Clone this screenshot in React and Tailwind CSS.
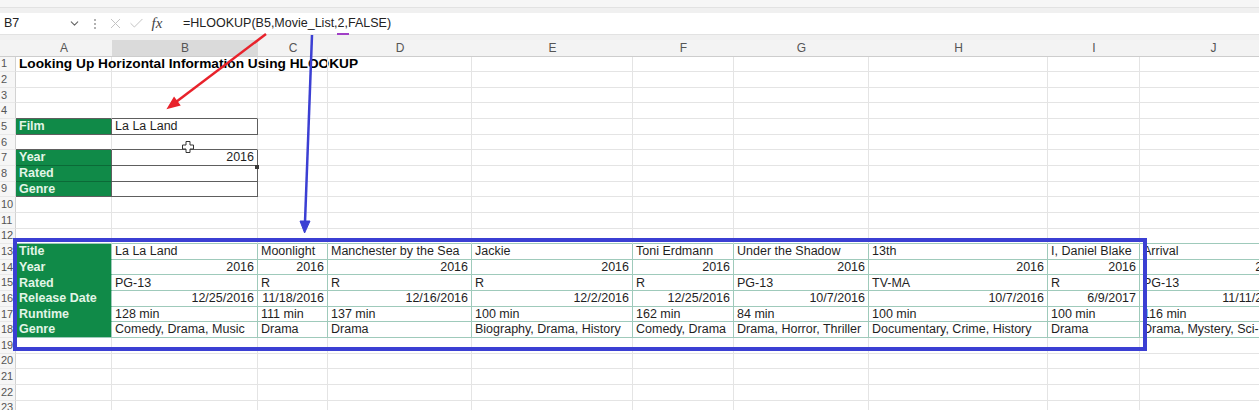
import React from "react";
import { ChevronDown, X, Check } from "lucide-react";

const LETTERS = ["A", "B", "C", "D", "E", "F", "G", "H", "I", "J"];

const LABELS = ["Title", "Year", "Rated", "Release Date", "Runtime", "Genre"];

// movie table, rows 13-18, columns B-J
const MOVIES = [
  ["La La Land", "2016", "PG-13", "12/25/2016", "128 min", "Comedy, Drama, Music"],
  ["Moonlight", "2016", "R", "11/18/2016", "111 min", "Drama"],
  ["Manchester by the Sea", "2016", "R", "12/16/2016", "137 min", "Drama"],
  ["Jackie", "2016", "R", "12/2/2016", "100 min", "Biography, Drama, History"],
  ["Toni Erdmann", "2016", "R", "12/25/2016", "162 min", "Comedy, Drama"],
  ["Under the Shadow", "2016", "PG-13", "10/7/2016", "84 min", "Drama, Horror, Thriller"],
  ["13th", "2016", "TV-MA", "10/7/2016", "100 min", "Documentary, Crime, History"],
  ["I, Daniel Blake", "2016", "R", "6/9/2017", "100 min", "Drama"],
  ["Arrival", "2016", "PG-13", "11/11/2016", "116 min", "Drama, Mystery, Sci-Fi"],
];

const RIGHT_ROWS = [1, 3]; // year + release date are right aligned

const isSmall = (r, c) =>
  (r === 5 && c >= 0 && c <= 1) || (r >= 7 && r <= 9 && c >= 0 && c <= 1);
const isBig = (r, c) => r >= 13 && r <= 18 && c >= 0 && c <= 9;
const isGreen = (r, c) => c === 0 && (isSmall(r, c) || isBig(r, c));

const R_CLS = {
  light: "border-r-[#e4e4e4]",
  dark: "border-r-[#5e5e5e]",
  teal: "border-r-[#9fcabb]",
};
const B_CLS = {
  light: "border-b-[#e4e4e4]",
  dark: "border-b-[#5e5e5e]",
  teal: "border-b-[#9fcabb]",
  green: "border-b-[#108a48]",
  dgreen: "border-b-[#0b6a37]",
};

const rightKind = (r, c) => {
  if (isSmall(r, c) || isSmall(r, c + 1)) return "dark";
  if (isBig(r, c) || isBig(r, c + 1)) return "teal";
  return "light";
};

const bottomKind = (r, c) => {
  if (isGreen(r, c) && isGreen(r + 1, c)) return isBig(r, c) ? "green" : "dgreen";
  if (isSmall(r, c) || isSmall(r + 1, c)) return "dark";
  if (isBig(r, c) || isBig(r + 1, c)) return "teal";
  return "light";
};

const cellData = (r, c) => {
  if (r === 1 && c === 0)
    return { t: "Looking Up Horizontal Information Using HLOOKUP", title: true };
  if (r === 5 && c === 0) return { t: "Film" };
  if (r === 5 && c === 1) return { t: "La La Land" };
  if (r === 7 && c === 0) return { t: "Year" };
  if (r === 7 && c === 1) return { t: "2016", right: true };
  if (r === 8 && c === 0) return { t: "Rated" };
  if (r === 9 && c === 0) return { t: "Genre" };
  if (r >= 13 && r <= 18) {
    const i = r - 13;
    if (c === 0) return { t: LABELS[i] };
    return { t: MOVIES[c - 1][i], right: RIGHT_ROWS.includes(i) };
  }
  return { t: "" };
};

const Cell = ({ r, c }) => {
  const d = cellData(r, c);
  const green = isGreen(r, c);
  return (
    <div
      className={[
        "flex items-center whitespace-nowrap border-r border-b px-[3px] leading-none",
        R_CLS[rightKind(r, c)],
        B_CLS[bottomKind(r, c)],
        d.right ? "justify-end" : "justify-start",
        green ? "bg-[#108a48] font-bold text-[#e2f5e7]" : "text-[#1f1f1f]",
        d.title ? "text-[13.7px] font-bold text-black" : "text-[12.5px]",
      ].join(" ")}
    >
      {d.t}
    </div>
  );
};

const Grid = () => {
  const rows = Array.from({ length: 23 }, (_, i) => i + 1);
  return (
    <div className="grid w-[1300px] grid-cols-[16px_96px_146px_70px_144px_161px_101px_135px_179px_92px_147px] auto-rows-[15.65px]">
      {rows.map((r) => (
        <React.Fragment key={r}>
          <div className="flex items-center border-r border-b border-r-[#d2d2d2] border-b-[#e8e8e8] bg-[#f6f6f6] pl-px text-[11px] leading-none text-[#555]">
            {r}
          </div>
          {LETTERS.map((_, c) => (
            <Cell key={c} r={r} c={c} />
          ))}
        </React.Fragment>
      ))}
    </div>
  );
};

const FormulaBar = () => (
  <div className="flex h-[21px] items-center bg-white text-[12.5px] text-[#222]">
    <div className="flex w-[86px] items-center justify-between pl-[4px] pr-[5px]">
      <span>B7</span>
      <ChevronDown size={13} strokeWidth={2} className="text-[#666]" />
    </div>
    <div className="flex w-[18px] flex-col items-center justify-center gap-[2px]">
      <span className="h-[2px] w-[2px] rounded-full bg-[#999]" />
      <span className="h-[2px] w-[2px] rounded-full bg-[#999]" />
      <span className="h-[2px] w-[2px] rounded-full bg-[#999]" />
    </div>
    <div className="flex w-[22px] justify-center">
      <X size={17} strokeWidth={1.4} className="text-[#c2c2c2]" />
    </div>
    <div className="flex w-[20px] justify-center">
      <Check size={17} strokeWidth={1.4} className="text-[#c2c2c2]" />
    </div>
    <div className="flex w-[22px] justify-center font-['Liberation_Serif',serif] text-[15px] italic text-[#444]">
      fx
    </div>
    <div className="ml-[15px]">=HLOOKUP(B5,Movie_List,2,FALSE)</div>
  </div>
);

const ColumnHeaders = () => (
  <div className="grid h-[16.5px] w-[1300px] grid-cols-[16px_96px_146px_70px_144px_161px_101px_135px_179px_92px_147px] border-b border-[#cdcdcd] bg-[#f3f3f3] text-[12px] leading-none text-[#555]">
    <div />
    {LETTERS.map((l) => (
      <div
        key={l}
        className={
          "flex items-center justify-center " + (l === "B" ? "bg-[#dadada]" : "")
        }
      >
        {l}
      </div>
    ))}
  </div>
);

const Annotations = () => (
  <>
    {/* blue box round the movie table */}
    <div className="pointer-events-none absolute left-[13px] top-[238px] h-[113px] w-[1134px] border-4 border-[#3b3fd3]" />
    {/* purple mark under the 2 */}
    <div className="absolute left-[337px] top-[33px] h-[2px] w-[12px] bg-[#a03fc6]" />
    {/* fill handle */}
    <div className="absolute left-[255px] top-[165px] h-[4px] w-[4px] bg-[#3a3a3a]" />
    <svg
      className="pointer-events-none absolute left-0 top-0"
      width="1259"
      height="410"
      viewBox="0 0 1259 410"
    >
      <line x1="266" y1="34" x2="176" y2="102" stroke="#e8222b" strokeWidth="2.5" />
      <polygon points="168,108 179.5,105 174.1,97.8" fill="#e8222b" stroke="#e8222b" strokeWidth="1.5" />
      <line x1="312" y1="35" x2="305" y2="222" stroke="#3b3fd3" strokeWidth="2.5" />
      <polygon points="304.6,233 300,221 310,221" fill="#3b3fd3" stroke="#3b3fd3" strokeWidth="1" />
      {/* cursor */}
      <path
        d="M186 141.5h4v3.5h3.5v4h-3.5v3.5h-4v-3.5h-3.5v-4h3.5z"
        fill="#fff"
        stroke="#333"
        strokeWidth="1"
      />
    </svg>
  </>
);

export default function App() {
  return (
    <div className="relative h-[410px] w-[1259px] overflow-hidden bg-white font-['Liberation_Sans',Arial,sans-serif]">
      <div className="h-[8px] border-b border-[#e2e2e2] bg-[#f6f6f6]" />
      <div className="h-[5px] bg-[#f0f0f0]" />
      <FormulaBar />
      <div className="h-[6px] border-t border-[#e2e2e2] bg-[#f0f0f0]" />
      <ColumnHeaders />
      <Grid />
      <Annotations />
    </div>
  );
}
